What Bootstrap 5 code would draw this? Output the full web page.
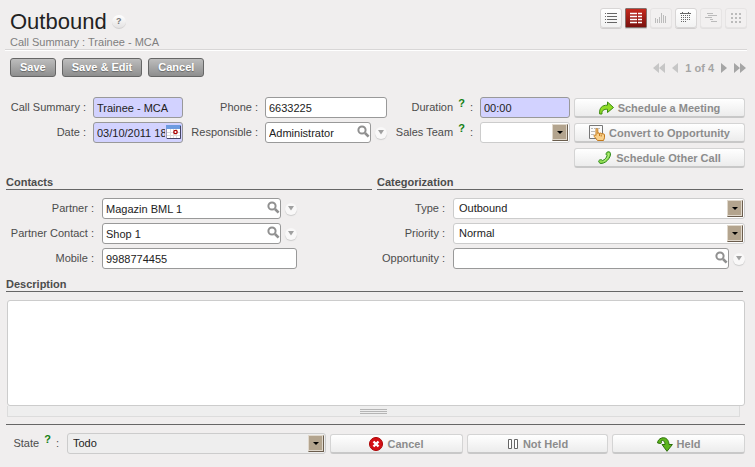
<!DOCTYPE html>
<html lang="en">
<head>
<meta charset="utf-8">
<meta name="viewport" content="width=device-width, initial-scale=1">
<title>Outbound</title>
<link href="https://cdn.jsdelivr.net/npm/bootstrap@5.3.0/dist/css/bootstrap.min.css" rel="stylesheet">
<style>
body{background:#f0eeee;color:#4c4c4c;font:11px/14px "Liberation Sans",Arial,sans-serif}
.page-pad{padding:8px 8px 0 5px}
h1{font-size:22px;line-height:26px;color:#222;font-weight:400}
h2{font-size:11px;line-height:14px;font-weight:700;color:#4c4c4c;border-bottom:1px solid #666;margin:0}
.head-text{padding:1px 0 0 5px}
.subtitle{color:#7f7f7f;line-height:14px}
.rule{height:2px;background:#d8d6d6;border-bottom:1px solid #fff}
button{padding:0;border:0;background:none;color:inherit;line-height:14px}
.help-btn{width:14px;height:14px;border-radius:50%;background:linear-gradient(#fff,#e4e2e2);border-bottom:1px solid #d2d0d0;color:#777;font-size:9px;line-height:13px;font-weight:700}
.title-row{gap:5px}
.views{gap:3px}
.view-btn{width:22px;height:20px;border:1px solid #d8d6d6;border-radius:3px;background:linear-gradient(#fff,#f2f2f2);box-shadow:0 1px 0 #d0cece;color:#666}
.view-btn:disabled{border-color:#e6e4e4;box-shadow:0 1px 0 #e2e0e0;background:#f2f0f0;color:#bbb}
.view-btn.current{background:linear-gradient(#c5291d,#7a120f);border-color:#84706c;color:#fff;border-radius:1px}
.toolbar-row{padding:7px 1px 0 5px}
.cmds{gap:6px}
.cmd-btn{height:19px;border:1px solid #666;border-radius:3px;background:linear-gradient(#bdbdbd,#8e8e8e);color:#fff;font-weight:700;padding:0 9px;line-height:17px;text-shadow:0 1px 1px #666}
.pager{color:#a5a5a5;gap:7px;font-weight:700}
.pager .off{color:#c6c6c6}
.form-top{display:grid;grid-template-columns:88px 90fr 82px 122fr 93px 90fr 175fr;row-gap:4px;margin-top:20px;padding-right:2px}
.form-top .lab{padding-right:7px}
.form-left,.form-right{display:grid;row-gap:4px;margin-top:8px}
.form-left{grid-template-columns:96px 1fr 75px}
.form-left>.short{grid-column:2/3}
.form-right{grid-template-columns:76px 1fr}
.form-right{margin-right:-2px}
.two-up{display:grid;grid-template-columns:1fr 1fr;column-gap:5px;padding:0 4px 0 1px;margin-top:7px}
.lab{height:21px;line-height:21px;text-align:right;padding-right:8px;white-space:nowrap;color:#4c4c4c}
.hint{color:#128012;font-weight:700;font-size:11px;position:relative;top:-4px;margin:0 2px}
.fld{display:block;width:100%;min-width:0;height:21px;border:1px solid #999;border-radius:3px;background:#fff;color:#222;padding:0 3px;line-height:19px;font-size:11px}
.fld.req{background:#d2d2ff}
.fld.dated{padding-right:17px}
select.fld{appearance:none;border-color:#ccc;padding-left:5px;background:#fff url("data:image/svg+xml,%3Csvg xmlns='http://www.w3.org/2000/svg' width='16' height='17'%3E%3Cpath fill='%23e0d8cc' d='M0 0h16v17H0z'/%3E%3Cpath fill='%236b5d4d' d='M16 0v17H0l1-1h14V1z'/%3E%3Cpath fill='%23b3a48e' d='M1 1h13v14H1z'/%3E%3Cpath d='M5 7h6L8 10z'/%3E%3C/svg%3E") no-repeat right 1px top 1px}
select.fld.flat{background-color:#eee}
.over{position:absolute;right:1px;top:3px;line-height:0}
.pick{gap:4px}
.drop-btn{width:12px;height:12px;border-radius:50%;background:#f9f8f8;box-shadow:0 1px 1px #ccc;line-height:0;flex:none;color:#a0a0a0}
.drop-btn svg{display:block;margin:auto}
.act{display:flex;align-items:center;justify-content:center;gap:4px;width:100%;height:20px;border:1px solid #d4d4d4;border-bottom:2px solid #c8c8c8;border-radius:3px;background:linear-gradient(#fff,#ececec);color:#8c8c8c;font-weight:700;white-space:nowrap}
.acts{grid-row:1/4;grid-column:7;row-gap:5px;padding:1px 0 0 4px}
.desc-head{margin:8px 4px 8px 1px}
.desc-wrap{padding:0 2px}
.desc{display:block;width:100%;height:106px;border:1px solid #ccc;border-radius:3px;background:#fff;resize:none;padding:3px;font-size:11px}
.grip{height:11px;margin-right:5px;border:1px solid #dcdcdc;border-top:0;background:#eee;padding-top:3px}
.grip i{display:block;width:27px;height:5px;margin:auto;background:repeating-linear-gradient(#b5b5b5 0 1px,#eee 1px 2px)}
.foot{display:grid;grid-template-columns:57px 259fr 133fr 141fr 133fr;column-gap:4px;border-top:1px solid #666;margin:7px 2px 0 1px;padding:8px 0 0}
.foot .lab{padding-right:4px}
.foot .act{margin-top:1px}
svg{flex:none}
</style>
<script src="https://cdn.jsdelivr.net/npm/bootstrap@5.3.0/dist/js/bootstrap.bundle.min.js"></script>
</head>
<body>
<svg class="d-none">
<symbol id="mag" viewBox="0 0 13 13"><circle cx="5" cy="5" r="3.6" fill="none" stroke="#909090" stroke-width="2"/><path d="M8 8l3.6 3.6" stroke="#909090" stroke-width="2.6"/></symbol>
<symbol id="dn" viewBox="0 0 6 5"><path d="M0 0h6L3 4.500z" fill="currentColor"/></symbol>
</svg>
<main class="page-pad">
<header class="d-flex justify-content-between align-items-start">
<div class="head-text"><div class="title-row d-flex align-items-center"><h1 class="m-0">Outbound</h1><button class="help-btn" type="button">?</button></div><div class="subtitle">Call Summary : Trainee - MCA</div></div>
<nav class="views d-flex" aria-label="Views">
<button class="view-btn" aria-label="List"><svg class="d-block m-auto" width="14" height="12"><path d="M1 1.5h1M3 1.5h10M1 4.5h1M3 4.5h10M1 7.5h1M3 7.5h10M1 10.5h1M3 10.5h10" stroke="currentColor" stroke-width="1.2"/></svg></button>
<button class="view-btn current" aria-label="Form"><svg class="d-block m-auto" width="14" height="12"><path d="M1 1.5h7M9 1.5h4M1 4.5h7M9 4.5h4M1 7.5h7M9 7.5h4M1 10.5h7M9 10.5h4" stroke="currentColor" stroke-width="1.4"/></svg></button>
<button class="view-btn" aria-label="Graph" disabled><svg class="d-block m-auto" width="14" height="12"><path d="M1.5 6v5M3.500 7v4M5.500 5v6M7.500 1v10M9.500 3v8M11.500 4v7" stroke="currentColor"/></svg></button>
<button class="view-btn" aria-label="Calendar"><svg class="d-block m-auto" width="14" height="12"><path d="M1 1.5h11M3.500 0v1M9.500 0v1" stroke="currentColor"/><path d="M2 3.500h9M2 5.500h9M2 7.500h9M2 9.500h5" stroke="currentColor" stroke-dasharray="1 1"/></svg></button>
<button class="view-btn" aria-label="Gantt" disabled><svg class="d-block m-auto" width="14" height="12"><path d="M3 1.5h6M4 3.500h9M1 5.500h7M6 7.500h3M7 9.500h6" stroke="currentColor"/></svg></button>
<button class="view-btn" aria-label="Kanban" disabled><svg class="d-block m-auto" width="14" height="12"><path d="M2 2h10M2 6h10M2 10h10" stroke="currentColor" stroke-width="2" stroke-dasharray="2 2"/></svg></button>
</nav>
</header>
<div class="rule"></div>
<div class="toolbar-row d-flex justify-content-between align-items-center">
<div class="cmds d-flex"><button class="cmd-btn">Save</button><button class="cmd-btn">Save &amp; Edit</button><button class="cmd-btn">Cancel</button></div>
<div class="pager d-flex align-items-center">
<button class="off" aria-label="First"><svg class="d-block" width="12" height="10"><path d="M6 0v10L0 5zM12 0v10L6 5z" fill="currentColor"/></svg></button>
<button class="off" aria-label="Previous"><svg class="d-block" width="6" height="10"><path d="M6 0v10L0 5z" fill="currentColor"/></svg></button>
<span>1 of 4</span>
<button aria-label="Next"><svg class="d-block" width="6" height="10"><path d="M0 0v10l6-5z" fill="currentColor"/></svg></button>
<button aria-label="Last"><svg class="d-block" width="12" height="10"><path d="M0 0v10l6-5zM6 0v10l6-5z" fill="currentColor"/></svg></button>
</div></div>
<form>
<div class="form-top">
<label class="lab" for="f1">Call Summary :</label><div><input class="fld req" id="f1" value="Trainee - MCA"></div>
<label class="lab" for="f2">Phone :</label><div><input class="fld" id="f2" value="6633225"></div>
<label class="lab" for="f3">Duration <span class="hint">?</span> :</label><div><input class="fld req" id="f3" value="00:00"></div>
<div class="acts d-grid align-content-start">
<button type="button" class="act"><svg width="15" height="14"><path d="M.7 13C0 7 3 4 8.500 4.200V1l6 5.500-6 5V8.300C5 8 2.500 9.500 3 13z" fill="#8fdc26" stroke="#3c8a10"/></svg>Schedule a Meeting</button>
<button type="button" class="act"><svg width="16" height="16"><path d="M.5.500h13v13H.5z" fill="#fafafa" stroke="#777"/><path d="M2 3.500h2M5 3.500h6M2 6.500h4M2 9.500h3" stroke="#bbb"/><path d="M7 4.500c0-1.200 1.800-1.200 1.800 0v4c0-1 1.700-1 1.700.2 0-1 1.700-.9 1.700.3 0-.9 1.800-.8 1.800.3 0-.7 1.500-.6 1.500.5v3l-1 2.700H8.500L5.300 11.500C4.600 10 6 9.300 7 10.500z" fill="#f9d08a" stroke="#c47a1c"/><path d="M10.500 9v2M12.200 9.500v2" stroke="#c47a1c"/></svg>Convert to Opportunity</button>
<button type="button" class="act"><svg width="14" height="14"><path d="M8.500 1.800C9 .8 11 .3 12 1.300c2.200 2.500-2.500 11-9 11.200C1.500 12.500.3 10.800.8 9.700 1.500 8.500 3.700 8.300 4.500 9.500c2.300-.6 4-2.800 4.600-5C8 4 7.800 3 8.500 1.800z" fill="#8fdc50" stroke="#2f8a1c"/><path d="M10.500 2.300c1 1.500-1.500 6.500-5 8" fill="none" stroke="#b5ee88"/></svg>Schedule Other Call</button>
</div>
<label class="lab" for="f4">Date :</label><div class="position-relative"><input class="fld req dated" id="f4" value="03/10/2011 18:06:09"><button type="button" class="over" aria-label="Pick date"><svg width="16" height="15"><path d="M.5.5h14v13H.5z" fill="#fff" stroke="#9a9ab8"/><path d="M0 0h15v4H0z" fill="#6d9be0"/><path d="M4.500 4v9M7.500 4v9M10.500 4v9M1 7.500h13M1 10.500h13" stroke="#ddd"/><path d="M14.500 1v12.500H1" stroke="#446" fill="none"/><circle cx="9.500" cy="7" r="1.700" fill="#fff" stroke="#a00" stroke-width="1.300"/></svg></button></div>
<label class="lab" for="f5">Responsible :</label><div class="pick d-flex align-items-center"><div class="position-relative flex-grow-1"><input class="fld" id="f5" value="Administrator"><button type="button" class="over" aria-label="Search"><svg width="13" height="13"><use href="#mag"/></svg></button></div><button type="button" class="drop-btn" aria-label="Open"><svg width="6" height="5"><use href="#dn"/></svg></button></div>
<label class="lab" for="f6">Sales Team <span class="hint">?</span> :</label><div><select class="fld" id="f6"><option></option></select></div>
</div>
<div class="two-up">
<section><h2>Contacts</h2><div class="form-left">
<label class="lab" for="g1">Partner :</label><div class="short pick d-flex align-items-center"><div class="position-relative flex-grow-1"><input class="fld" id="g1" value="Magazin BML 1"><button type="button" class="over" aria-label="Search"><svg width="13" height="13"><use href="#mag"/></svg></button></div><button type="button" class="drop-btn" aria-label="Open"><svg width="6" height="5"><use href="#dn"/></svg></button></div><span></span>
<label class="lab" for="g2">Partner Contact :</label><div class="short pick d-flex align-items-center"><div class="position-relative flex-grow-1"><input class="fld" id="g2" value="Shop 1"><button type="button" class="over" aria-label="Search"><svg width="13" height="13"><use href="#mag"/></svg></button></div><button type="button" class="drop-btn" aria-label="Open"><svg width="6" height="5"><use href="#dn"/></svg></button></div><span></span>
<label class="lab" for="g3">Mobile :</label><div class="short"><input class="fld" id="g3" value="9988774455"></div>
</div></section>
<section><h2>Categorization</h2><div class="form-right">
<label class="lab" for="h1">Type :</label><div><select class="fld" id="h1"><option>Outbound</option></select></div>
<label class="lab" for="h2">Priority :</label><div><select class="fld" id="h2"><option>Normal</option></select></div>
<label class="lab" for="h3">Opportunity :</label><div class="pick d-flex align-items-center"><div class="position-relative flex-grow-1"><input class="fld" id="h3"><button type="button" class="over" aria-label="Search"><svg width="13" height="13"><use href="#mag"/></svg></button></div><button type="button" class="drop-btn" aria-label="Open"><svg width="6" height="5"><use href="#dn"/></svg></button></div>
</div></section>
</div>
<h2 class="desc-head"><label class="d-block" for="d">Description</label></h2>
<div class="desc-wrap"><textarea class="desc" id="d"></textarea><div class="grip"><i></i></div></div>
<div class="foot">
<label class="lab" for="s">State <span class="hint">?</span> :</label><div><select class="fld flat" id="s"><option>Todo</option></select></div>
<button type="button" class="act"><svg width="14" height="14"><circle cx="7" cy="7" r="6.500" fill="#d40f14" stroke="#a00"/><path d="M4.500 4.500l5 5M9.500 4.500l-5 5" stroke="#fff" stroke-width="2.400"/></svg>Cancel</button>
<button type="button" class="act"><svg width="12" height="12"><path d="M1.500 1.500h3v9h-3zM7.500 1.500h3v9h-3z" fill="#fff" stroke="#666"/></svg>Not Held</button>
<button type="button" class="act"><svg width="16" height="16"><path d="M.6 7C.5 1 11.500-1.500 12 8.500h3.400L10 15.300 5 8.500h3C8 5 5.500 3.500 4 5c1 1 .5 2.500-.5 2.500z" fill="#5cb51c" stroke="#2d6e0a"/></svg>Held</button>
</div>
</form>
</main>
</body>
</html>
